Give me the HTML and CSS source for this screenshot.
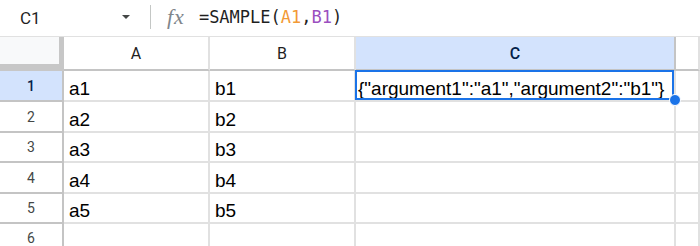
FILE: index.html
```html
<!DOCTYPE html>
<html>
<head>
<meta charset="utf-8">
<link rel="stylesheet" href="styles.css">
</head>
<body>
<div class="formula-bar">
  <div class="name-box">
    <span class="name">C1</span>
    <span class="caret"></span>
  </div>
  <span class="sep"></span>
  <span class="fx">fx</span>
  <span class="formula">=SAMPLE(<span class="ref-a">A1</span>,<span class="ref-b">B1</span>)</span>
</div>
<div class="grid">
  <div class="corner"></div>
  <div class="colhead">A</div>
  <div class="colhead">B</div>
  <div class="colhead selected">C</div>
  <div class="colhead"></div>

  <div class="rowhead selected">1</div>
  <div class="cell">a1</div>
  <div class="cell">b1</div>
  <div class="cell active"><span class="json">{"argument1":"a1","argument2":"b1"}</span><span class="sel-box"></span><span class="handle"></span></div>
  <div class="cell"></div>

  <div class="rowhead">2</div>
  <div class="cell">a2</div>
  <div class="cell">b2</div>
  <div class="cell"></div>
  <div class="cell"></div>

  <div class="rowhead">3</div>
  <div class="cell">a3</div>
  <div class="cell">b3</div>
  <div class="cell"></div>
  <div class="cell"></div>

  <div class="rowhead">4</div>
  <div class="cell">a4</div>
  <div class="cell">b4</div>
  <div class="cell"></div>
  <div class="cell"></div>

  <div class="rowhead">5</div>
  <div class="cell">a5</div>
  <div class="cell">b5</div>
  <div class="cell"></div>
  <div class="cell"></div>

  <div class="rowhead">6</div>
  <div class="cell"></div>
  <div class="cell"></div>
  <div class="cell"></div>
  <div class="cell"></div>
</div>
</body>
</html>
```
FILE: styles.css
```css
html, body {
  margin: 0;
  padding: 0;
  background: #fff;
  overflow: hidden;
}
body {
  width: 700px;
  height: 246px;
  font-family: Roboto, "Liberation Sans", sans-serif;
  color: #1f1f1f;
}
.formula-bar {
  height: 36px;
  border-bottom: 1px solid #e1e1e1;
  display: flex;
  align-items: center;
}
.name-box {
  width: 141px;
  display: flex;
  align-items: center;
  padding-left: 20px;
  box-sizing: border-box;
}
.name {
  font-size: 17px;
  color: #1f1f1f;
}
.caret {
  margin-left: auto;
  margin-right: 11px;
  width: 0;
  height: 0;
  border-left: 4px solid transparent;
  border-right: 4px solid transparent;
  border-top: 4px solid #444746;
  margin-top: -3px;
}
.sep {
  width: 1px;
  height: 24px;
  background: #c4c7c5;
  margin-left: 9px;
  margin-top: -3px;
}
.fx {
  margin-left: 16px;
  font-family: "Liberation Serif", serif;
  font-style: italic;
  font-size: 22px;
  color: #80868b;
  margin-top: -2px;
  letter-spacing: 1px;
}
.formula {
  margin-left: 14px;
  font-family: "DejaVu Sans Mono", monospace;
  font-size: 17px;
  color: #1f1f1f;
  margin-top: -2px;
}
.ref-a { color: #f29a36; }
.ref-b { color: #9b4fbf; }

.grid {
  display: grid;
  grid-template-columns: 64px 146px 146px 320px 1fr;
  grid-template-rows: 34px 31px 31px 30px 31px 30px 30px;
}
.grid > div {
  box-sizing: border-box;
}
.corner {
  background: #f8f9fa;
  border-right: 5px solid #c7c7c7;
  border-bottom: 7px solid #c7c7c7;
}
.colhead {
  border-right: 2px solid #e1e1e1;
  border-bottom: 2px solid #c4c4c4;
  display: flex;
  align-items: center;
  justify-content: center;
  font-size: 16px;
  color: #1f1f1f;
  padding-top: 1px;
}
.colhead.selected {
  background: #d3e3fd;
  color: #041e49;
  font-weight: 500;
  border-right-color: #c4c4c4;
}
.rowhead {
  border-right: 2px solid #c4c4c4;
  border-bottom: 2px solid #c4c4c4;
  display: flex;
  align-items: center;
  justify-content: center;
  font-size: 14px;
  color: #444746;
}
.rowhead.selected {
  background: #d3e3fd;
  color: #041e49;
  font-weight: 500;
}
.cell {
  border-right: 2px solid #e1e1e1;
  border-bottom: 2px solid #e1e1e1;
  display: flex;
  align-items: flex-end;
  padding-left: 5px;
  font-family: "Liberation Sans", Arial, sans-serif;
  font-size: 19px;
  line-height: 22px;
  color: #000;
  white-space: nowrap;
}
.cell.active {
  position: relative;
  padding-left: 2px;
}
.sel-box {
  position: absolute;
  left: -1px;
  top: -1px;
  right: 0;
  bottom: 0;
  border: 2px solid #1a73e8;
}
.handle {
  position: absolute;
  right: -7px;
  bottom: -6px;
  width: 10px;
  height: 10px;
  border-radius: 50%;
  background: #1a73e8;
  border: 1px solid #fff;
  z-index: 2;
}
```
